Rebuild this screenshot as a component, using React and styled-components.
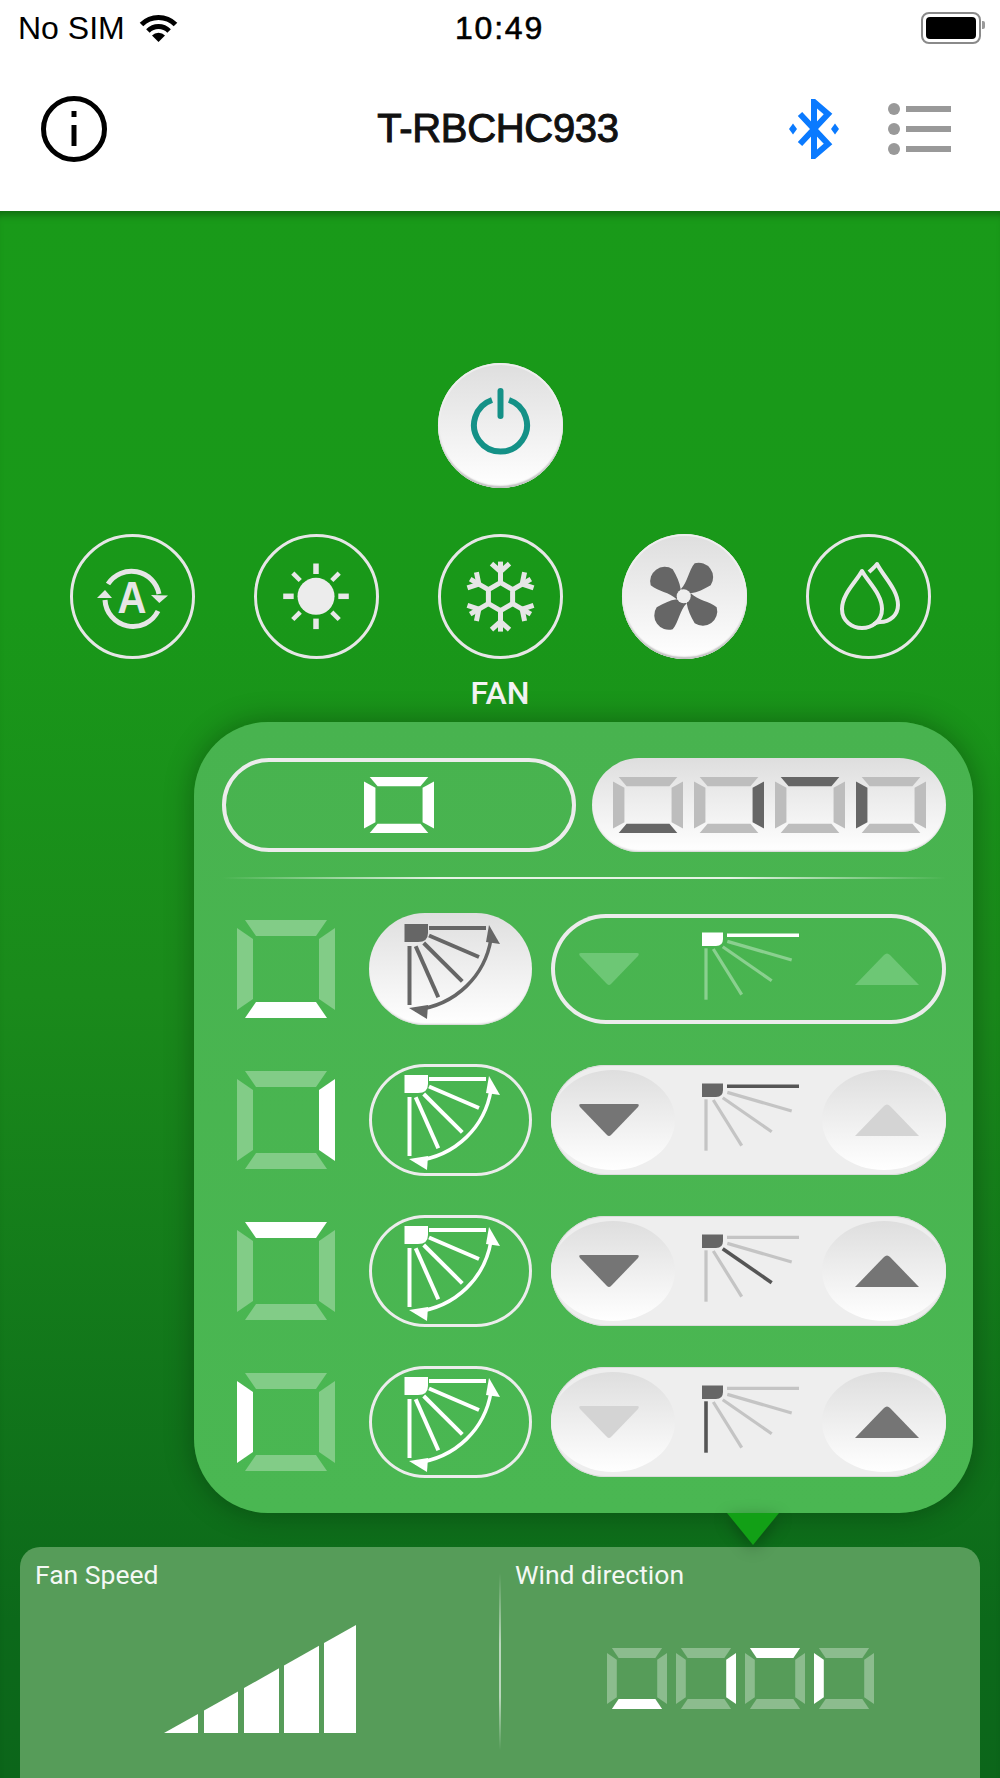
import React from 'react'
import styled, { createGlobalStyle } from 'styled-components'

const GlobalStyle = createGlobalStyle`
  html, body {
    margin: 0;
    padding: 0;
    background: #fff;
    font-family: "Liberation Sans", Arial, sans-serif;
  }
`

const Screen = styled.div`
  width: 1000px;
  height: 1778px;
  display: flex;
  flex-direction: column;
  overflow: hidden;
`

////

const StatusBar = styled.div`
  height: 56px;
  display: grid;
  grid-template-columns: 1fr auto 1fr;
  align-items: center;
  padding: 0 19px 0 18px;
  color: #000;
`

const Carrier = styled.div`
  display: flex;
  align-items: center;
  gap: 13px;
  font-size: 32px;
`

const Clock = styled.div`
  font-size: 32px;
  font-weight: 500;
  letter-spacing: 1.8px;
  -webkit-text-stroke: 0.6px #000;
`

const Battery = styled.div`
  justify-self: end;
  width: 50px;
  height: 22px;
  padding: 3px;
  border: 2px solid #8a8a8a;
  border-radius: 8px;
  position: relative;

  &::before {
    content: '';
    display: block;
    height: 100%;
    border-radius: 4px;
    background: #000;
  }
  &::after {
    content: '';
    position: absolute;
    right: -6px;
    top: 7px;
    width: 3px;
    height: 8px;
    border-radius: 0 2px 2px 0;
    background: #9a9a9a;
  }
`

const NavBar = styled.div`
  height: 155px;
  box-sizing: border-box;
  display: flex;
  align-items: center;
  padding: 0 49px 10px 41px;
`

const NavSide = styled.div`
  flex: 1;
  display: flex;
  align-items: center;
  justify-content: ${p => (p.$right ? 'flex-end' : 'flex-start')};
  gap: 49px;
`

const NavTitle = styled.div`
  margin-left: 4px;
  font-size: 40px;
  letter-spacing: -0.3px;
  -webkit-text-stroke: 1px #111;
  color: #111;
`

////

const Main = styled.div`
  flex: 1;
  display: flex;
  flex-direction: column;
  background: linear-gradient(#199a19 0, #199819 25%, #1a8a1b 50%, #0c691a 90%, #0c661a 100%);
  box-shadow: inset 0 9px 9px -6px rgba(0, 0, 0, 0.35);
`

const Round = styled.div`
  width: 125px;
  height: 125px;
  box-sizing: border-box;
  border-radius: 50%;
  flex: none;
  display: flex;
  align-items: center;
  justify-content: center;
  ${p => p.$on
    ? `background: linear-gradient(#dedede, #ffffff);
       box-shadow: inset 0 -3px 2px -1px #bdbdbd, inset 0 0 0 2px #eeeeee;`
    : `border: 3px solid #e6e6e6;`}
`

const PowerRow = styled.div`
  display: flex;
  justify-content: center;
  margin-top: 152px;
`

const ModeRow = styled.div`
  display: flex;
  justify-content: center;
  gap: 59px;
  margin-top: 46px;
`

const ModeLabel = styled.div`
  margin-top: 15px;
  height: 38px;
  line-height: 38px;
  text-align: center;
  color: #f4f4f4;
  font-family: Roboto, "Liberation Sans", sans-serif;
  font-size: 32px;
  font-weight: 500;
`

////

const Panel = styled.div`
  position: relative;
  z-index: 1;
  align-self: flex-end;
  width: 779px;
  height: 791px;
  box-sizing: border-box;
  margin: 10px 27px 0 0;
  padding: 36px 27px 0 28px;
  border-radius: 74px;
  background: linear-gradient(#48b34f, #4ab752);
  box-shadow: 0 0 30px rgba(0, 0, 0, 0.32);
`

const Pointer = styled.div`
  position: absolute;
  left: 533px;
  top: 100%;
  width: 0;
  height: 0;
  border-left: 26.5px solid transparent;
  border-right: 26.5px solid transparent;
  border-top: 32px solid #12a016;
  filter: drop-shadow(0 4px 8px rgba(0, 0, 0, 0.3));
`

const PanelTop = styled.div`
  display: flex;
  justify-content: space-between;
`

const OptionPill = styled.div`
  width: 354px;
  height: 94px;
  box-sizing: border-box;
  border-radius: 47px;
  display: flex;
  align-items: center;
  justify-content: center;
  gap: 11px;
  ${p => p.$on
    ? `background: linear-gradient(#dedede, #ffffff);
       box-shadow: inset 0 -2px 2px -1px #cfcfcf;`
    : `border: 4px solid #ececec;`}
`

const Divider = styled.div`
  height: 2px;
  margin: 25px 0 34px;
  background: linear-gradient(90deg, rgba(255,255,255,0), rgba(255,255,255,.85) 30%, rgba(255,255,255,.85) 70%, rgba(255,255,255,0));
`

const Rows = styled.div`
  display: flex;
  flex-direction: column;
  gap: 39px;
`

const Row = styled.div`
  display: flex;
  align-items: center;
  height: 112px;
`

const RowSegment = styled.div`
  width: 98px;
  height: 98px;
  margin: 0 34px 0 15px;
`

const SwingPill = styled.div`
  width: 163px;
  height: 112px;
  box-sizing: border-box;
  margin-right: 19px;
  border-radius: 56px;
  color: ${p => (p.$on ? '#666' : '#fff')};
  ${p => p.$on
    ? `background: linear-gradient(#dfdfdf, #ffffff);
       box-shadow: inset 0 -2px 2px -1px #cfcfcf;`
    : `box-shadow: inset 0 0 0 3px #ececec;`}
`

const StepPill = styled.div`
  width: 395px;
  height: 110px;
  box-sizing: border-box;
  border-radius: 55px;
  display: flex;
  align-items: center;
  ${p => p.$on
    ? `background: #eeeeee;
       box-shadow: inset 0 0 0 1px #dcdcdc;`
    : `box-shadow: inset 0 0 0 4px #ececec;`}
`

const StepButton = styled.div`
  width: 124px;
  height: 100px;
  flex: none;
  border-radius: 50%;
  display: flex;
  align-items: center;
  justify-content: center;
  ${p => p.$on && `background: linear-gradient(#dedede, #ffffff);`}
`

const VaneBox = styled.div`
  flex: 1;
  height: 110px;
`

////

const InfoCard = styled.div`
  position: relative;
  flex: 1;
  display: grid;
  grid-template-columns: 480px 480px;
  margin: 34px 20px 0;
  border-radius: 20px 20px 0 0;
  background: #569c59;
`

const InfoCell = styled.div`
  position: relative;
  padding: 14px 0 0 15px;
`

const CellDivider = styled.div`
  position: absolute;
  left: -1px;
  top: 26px;
  bottom: 28px;
  width: 2px;
  background: linear-gradient(rgba(255,255,255,0), rgba(255,255,255,.6) 40%, rgba(255,255,255,.6) 70%, rgba(255,255,255,0));
`

const CellLabel = styled.div`
  height: 28px;
  line-height: 28px;
  color: #f4f8f4;
  font-family: Roboto, "Liberation Sans", sans-serif;
  font-size: 26.5px;
`

const BarsBox = styled.div`
  margin: 36px 0 0 129px;
  width: 192px;
  height: 108px;
`

const DigitRow = styled.div`
  display: flex;
  gap: 9px;
  margin: 59px 0 0 92px;
`

const DigitBox = styled.div`
  width: 60px;
  height: 61px;
`

const OptionDigit = styled.div`
  width: 70px;
  height: 56px;
`

const SvgFill = styled.svg`
  display: block;
  width: 100%;
  height: 100%;
`

////

// a ring of four trapezoids, drawn with its own fills
const Segments = ({ side, on, off }) => {
  const parts = {
    top: '8,0 90,0 79,16 19,16',
    right: '98,8 98,90 82,79 82,19',
    bottom: '8,98 90,98 79,82 19,82',
    left: '0,8 0,90 16,79 16,19',
  }
  return (
    <SvgFill viewBox="0 0 98 98" preserveAspectRatio="none">
      {Object.keys(parts).map(k => (
        <polygon key={k} points={parts[k]} fill={side === 'all' || side === k ? on : off} />
      ))}
    </SvgFill>
  )
}

const SwingIcon = () => (
  <SvgFill viewBox="0 0 163 112" fill="none" stroke="currentColor">
    <path d="M35.5 11H59V20Q59 29 49 29H35.5Z" fill="currentColor" stroke="none" />
    <g strokeWidth="4">
      <path d="M60 15H117" />
      <path d="M60 22.5L110 44" />
      <path d="M54.7 30L93.3 68.3" />
      <path d="M46.7 33.3L69.3 84.3" />
      <path d="M40.5 33V92" />
    </g>
    <path d="M122 26C116 62 88 92 46 97" strokeWidth="3.5" />
    <path d="M120 12L131 31L117 29Z" fill="currentColor" stroke="none" />
    <path d="M40 95L59 92L58 106Z" fill="currentColor" stroke="none" />
  </SvgFill>
)

const vanes = [
  'M52 21.3H124',
  'M52.3 27.4L116.7 46',
  'M47.7 32.7L96.7 66.7',
  'M38.3 35L66.7 80.7',
  'M31 34.3V85.7',
]

const VaneIcon = ({ active, body, hot, dim }) => (
  <SvgFill viewBox="0 0 147 110" fill="none">
    <path d="M27 18.5H48V25Q48 32 41 32H27Z" fill={body} />
    {vanes.map((d, i) => (
      <path key={d} d={d} stroke={i === active ? hot : dim} strokeWidth={i === active ? 3.6 : 3.2} />
    ))}
  </SvgFill>
)

const Triangle = ({ up, color, shift }) => (
  <svg width="64" height="34" viewBox="0 0 64 34" style={{ transform: `translateX(${shift}px)` }}>
    {up
      ? <path d="M0 33L29 3Q32 0 35 3L64 33Z" fill={color} />
      : <path d="M4 1H60Q63 1 61 4L34 32Q32 34 30 32L3 4Q1 1 4 1Z" fill={color} />}
  </svg>
)

////

const PowerIcon = () => (
  <svg width="125" height="125" viewBox="0 0 125 125" fill="none" stroke="#149187" strokeWidth="6">
    <path d="M54 37A26.5 26.5 0 1 0 71 37" />
    <path d="M62.5 28V53" strokeLinecap="round" />
  </svg>
)

const AutoIcon = () => (
  <svg width="119" height="119" viewBox="3 3 119 119" fill="none" stroke="#e6e6e6" strokeWidth="5">
    <path d="M38 50A28 28 0 0 1 89 60" />
    <path d="M88 77A28 28 0 0 1 35 66" />
    <path d="M81 61L98 61.5L89.3 69Z" fill="#e6e6e6" stroke="none" />
    <path d="M27 64L42 64L35 56Z" fill="#e6e6e6" stroke="none" />
    <text x="62" y="79" textAnchor="middle" fontFamily="Liberation Sans, sans-serif" fontWeight="700" fontSize="44" textLength="29" lengthAdjust="spacingAndGlyphs" fill="#e6e6e6" stroke="none">A</text>
  </svg>
)

const SunIcon = () => {
  const rays = [0, 45, 90, 135, 180, 225, 270, 315]
  return (
    <svg width="119" height="119" viewBox="3 3 119 119" fill="none">
      <circle cx="62" cy="62.3" r="18.5" fill="#ececec" />
      {rays.map(a => (
        <path key={a} d="M62 29.5V40" stroke="#e8e8e8" strokeWidth={a % 90 ? 4.5 : 5.5} transform={`rotate(${a} 62 62.3)`} />
      ))}
    </svg>
  )
}

const SnowIcon = () => {
  const arms = [0, 60, 120, 180, 240, 300]
  return (
    <svg width="119" height="119" viewBox="3 3 119 119" fill="none" stroke="#e6e6e6" strokeWidth="5">
      <g transform="translate(62.5 62.6)">
        <path d="M0 -14L12.1 -7V7L0 14L-12.1 7V-7Z" />
        {arms.map(a => (
          <g key={a} transform={`rotate(${a})`}>
            <path d="M0 -14V-35" />
            <path d="M-9 -33L0 -25L9 -33" />
          </g>
        ))}
      </g>
    </svg>
  )
}

const FanIcon = () => {
  const blades = [0, 90, 180, 270]
  return (
    <svg width="125" height="125" viewBox="0 0 125 125">
      <g transform="translate(61.7 62.3)" fill="#666">
        {blades.map(a => (
          <path
            key={a}
            transform={`rotate(${a})`}
            d="M-3 -7C-4 -14 -7 -20 -11 -27A14.5 14.5 0 0 0 -33 -11C-26 -5 -14 -4 -7 3Z"
          />
        ))}
        <circle r="7" fill="#eeeeee" />
      </g>
    </svg>
  )
}

const DropIcon = () => (
  <svg width="119" height="119" viewBox="3 3 119 119" fill="none" stroke="#e8e8e8" strokeWidth="4" strokeLinejoin="round">
    <path d="M56 37C50 48 36 60 36 75C36 87 46 94 56 94C66 94 76 87 76 75C76 60 62 48 56 37Z" />
    <path d="M63 38C66 35 69 33 71 30C78 43 92 56 92 71C92 81 84 88 74 88C72 88 70 88.5 68 90" />
  </svg>
)

const InfoIcon = () => (
  <svg width="66" height="66" viewBox="0 0 66 66" fill="none" stroke="#000">
    <circle cx="33" cy="33" r="30.5" strokeWidth="5" />
    <path d="M33 29V50" strokeWidth="5" />
    <path d="M33 15V21" strokeWidth="5" />
  </svg>
)

const BluetoothIcon = () => (
  <svg width="50" height="60" viewBox="0 0 50 60" fill="none">
    <path d="M11 15L39 45L25 57V3L39 15L11 45" stroke="#0a7aff" strokeWidth="6" />
    <path d="M0 30L4 24.5L8 30L4 35.5Z" fill="#0a7aff" />
    <path d="M42 30L46 24.5L50 30L46 35.5Z" fill="#0a7aff" />
  </svg>
)

const ListIcon = () => {
  const ys = [10, 30, 50]
  return (
    <svg width="63" height="60" viewBox="0 0 63 60">
      {ys.map(y => (
        <g key={y} fill="#999">
          <circle cx="6" cy={y} r="6" />
          <rect x="18" y={y - 3} width="45" height="6" />
        </g>
      ))}
    </svg>
  )
}

const WifiIcon = () => (
  <svg width="41" height="28" viewBox="0 0 40 28" fill="none" stroke="#000" strokeWidth="5">
    <path d="M3 10.5A24 24 0 0 1 37 10.5" />
    <path d="M9.4 17A15 15 0 0 1 30.6 17" />
    <path d="M20 28L13.5 21.5A9 9 0 0 1 26.5 21.5Z" fill="#000" stroke="none" />
  </svg>
)

const FanBars = () => {
  const bars = [[0, 34], [40, 74], [80, 115], [120, 155], [160, 192]]
  const top = x => 108 - x * 0.5625
  return (
    <SvgFill viewBox="0 0 192 108">
      {bars.map(([a, b]) => (
        <polygon key={a} points={`${a},108 ${a},${top(a)} ${b},${top(b)} ${b},108`} fill="#fff" />
      ))}
    </SvgFill>
  )
}

////

const rows = [
  { side: 'bottom', swingOn: true, stepOn: false, vane: 0, down: false, up: false },
  { side: 'right', swingOn: false, stepOn: true, vane: 0, down: true, up: false },
  { side: 'top', swingOn: false, stepOn: true, vane: 2, down: true, up: true },
  { side: 'left', swingOn: false, stepOn: true, vane: 4, down: false, up: true },
]

const digits = ['bottom', 'right', 'top', 'left']

const StepControl = ({ row }) => {
  const { stepOn, vane, down, up } = row
  const tone = active => {
    if (!stepOn) return '#6dc775'
    return active ? '#757575' : '#d4d4d4'
  }
  return (
    <StepPill $on={stepOn}>
      <StepButton $on={stepOn}>
        <Triangle color={tone(down)} shift={-4} />
      </StepButton>
      <VaneBox>
        {stepOn
          ? <VaneIcon active={vane} body="#666" hot="#555" dim="#c4c4c4" />
          : <VaneIcon active={vane} body="#fff" hot="#fff" dim="#8ad08f" />}
      </VaneBox>
      <StepButton $on={stepOn}>
        <Triangle up color={tone(up)} shift={3} />
      </StepButton>
    </StepPill>
  )
}

export default function App() {
  return (
    <Screen>
      <GlobalStyle />
      <StatusBar>
        <Carrier>No SIM <WifiIcon /></Carrier>
        <Clock>10:49</Clock>
        <Battery />
      </StatusBar>
      <NavBar>
        <NavSide><InfoIcon /></NavSide>
        <NavTitle>T-RBCHC933</NavTitle>
        <NavSide $right>
          <BluetoothIcon />
          <ListIcon />
        </NavSide>
      </NavBar>
      <Main>
        <PowerRow>
          <Round $on><PowerIcon /></Round>
        </PowerRow>
        <ModeRow>
          <Round><AutoIcon /></Round>
          <Round><SunIcon /></Round>
          <Round><SnowIcon /></Round>
          <Round $on><FanIcon /></Round>
          <Round><DropIcon /></Round>
        </ModeRow>
        <ModeLabel>FAN</ModeLabel>
        <Panel>
          <PanelTop>
            <OptionPill>
              <OptionDigit><Segments side="all" on="#fff" off="#fff" /></OptionDigit>
            </OptionPill>
            <OptionPill $on>
              {digits.map(d => (
                <OptionDigit key={d}><Segments side={d} on="#666" off="#bdbdbd" /></OptionDigit>
              ))}
            </OptionPill>
          </PanelTop>
          <Divider />
          <Rows>
            {rows.map(row => (
              <Row key={row.side}>
                <RowSegment>
                  <Segments side={row.side} on="#fff" off="#82cc87" />
                </RowSegment>
                <SwingPill $on={row.swingOn}><SwingIcon /></SwingPill>
                <StepControl row={row} />
              </Row>
            ))}
          </Rows>
          <Pointer />
        </Panel>
        <InfoCard>
          <InfoCell>
            <CellLabel>Fan Speed</CellLabel>
            <BarsBox><FanBars /></BarsBox>
          </InfoCell>
          <InfoCell>
            <CellDivider />
            <CellLabel>Wind direction</CellLabel>
            <DigitRow>
              {digits.map(d => (
                <DigitBox key={d}><Segments side={d} on="#fff" off="#8cbc8e" /></DigitBox>
              ))}
            </DigitRow>
          </InfoCell>
        </InfoCard>
      </Main>
    </Screen>
  )
}
